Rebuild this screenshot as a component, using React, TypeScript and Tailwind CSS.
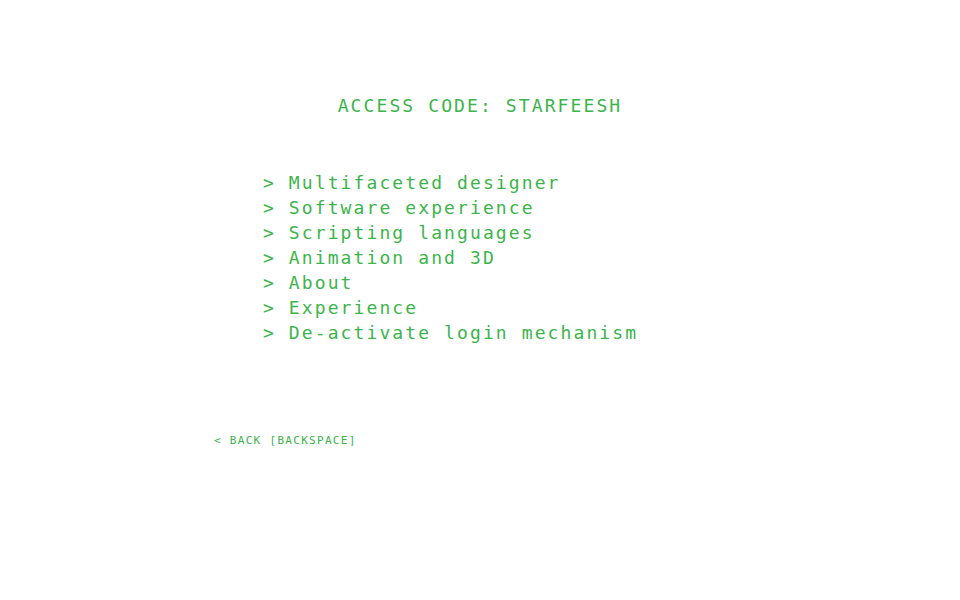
const items = [
    "Multifaceted designer",
    "Software experience",
    "Scripting languages",
    "Animation and 3D",
    "About",
    "Experience",
    "De-activate login mechanism",
];

export default function App() {
    return (
        <div className="w-[960px] h-[600px] bg-white text-[#3cb44b] font-['DejaVu_Sans_Mono',monospace]">
            <div className="mx-auto w-[532px] pt-[93px] flex flex-col">
                <h1 className="text-center text-[18px] leading-[25px] tracking-[2.1px] font-normal">
                    ACCESS CODE: STARFEESH
                </h1>

                <ul className="mt-[52px] pl-[49px] flex flex-col">
                    {items.map((item) => (
                        <li key={item} className="text-[18px] leading-[25px] tracking-[2.1px] whitespace-pre">
                            {"> " + item}
                        </li>
                    ))}
                </ul>

                <button className="mt-[88px] self-start text-[11px] leading-[16px] tracking-[1.3px] whitespace-pre">
                    {"< BACK [BACKSPACE]"}
                </button>
            </div>
        </div>
    );
}
